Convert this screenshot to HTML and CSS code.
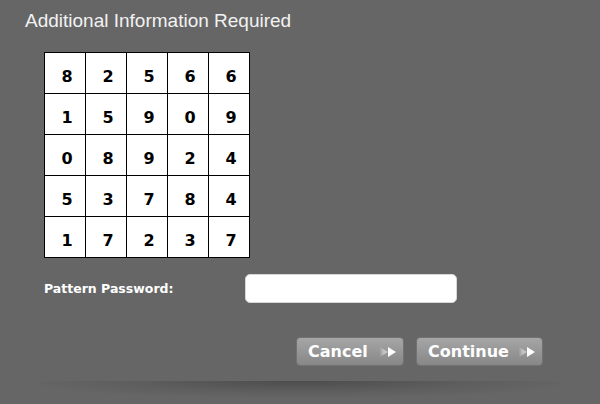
FILE: index.html
```html
<!DOCTYPE html>
<html>
<head>
<meta charset="utf-8">
<link rel="stylesheet" href="styles.css">
</head>
<body>
<div class="dialog">
  <h1 class="title">Additional Information Required</h1>
  <div class="grid">
    <div class="cell">8</div><div class="cell">2</div><div class="cell">5</div><div class="cell">6</div><div class="cell">6</div>
    <div class="cell">1</div><div class="cell">5</div><div class="cell">9</div><div class="cell">0</div><div class="cell">9</div>
    <div class="cell">0</div><div class="cell">8</div><div class="cell">9</div><div class="cell">2</div><div class="cell">4</div>
    <div class="cell">5</div><div class="cell">3</div><div class="cell">7</div><div class="cell">8</div><div class="cell">4</div>
    <div class="cell">1</div><div class="cell">7</div><div class="cell">2</div><div class="cell">3</div><div class="cell">7</div>
  </div>
  <div class="field">
    <label class="label" for="pw">Pattern Password:</label>
    <input class="input" id="pw" type="password">
  </div>
  <div class="actions">
    <button class="btn btn-cancel" type="button">Cancel<svg class="arrows" width="16" height="10" viewBox="0 0 16 10"><defs><linearGradient id="fa" x1="0" x2="1" y1="0" y2="0"><stop offset="0" stop-color="#fff" stop-opacity="0.05"/><stop offset="0.5" stop-color="#fff" stop-opacity="0.45"/></linearGradient></defs><polygon points="0,0 8,5 0,10" fill="url(#fa)"/><polygon points="8,0 16,5 8,10" fill="#fff"/></svg></button>
    <button class="btn btn-continue" type="button">Continue<svg class="arrows" width="16" height="10" viewBox="0 0 16 10"><defs><linearGradient id="fb" x1="0" x2="1" y1="0" y2="0"><stop offset="0" stop-color="#fff" stop-opacity="0.05"/><stop offset="0.5" stop-color="#fff" stop-opacity="0.45"/></linearGradient></defs><polygon points="0,0 8,5 0,10" fill="url(#fb)"/><polygon points="8,0 16,5 8,10" fill="#fff"/></svg></button>
  </div>
  <div class="shadow"></div>
</div>
</body>
</html>
```
FILE: styles.css
```css
html, body {
  margin: 0;
  padding: 0;
  background: #666666;
  height: 100%;
}
.dialog {
  width: 600px;
  padding-top: 10px;
}
.title {
  margin: 0 0 0 25px;
  font-family: "Liberation Sans", Arial, sans-serif;
  font-weight: normal;
  font-size: 19px;
  line-height: 22px;
  color: #f2f2f2;
}
.grid {
  display: grid;
  grid-template-columns: repeat(5, 40px);
  grid-auto-rows: 40px;
  gap: 1px;
  width: fit-content;
  margin: 20px 0 0 44px;
  background: #000;
  border: 1px solid #000;
}
.cell {
  box-sizing: border-box;
  background: #fff;
  display: flex;
  align-items: center;
  justify-content: center;
  padding: 6px 0 0 4px;
  font-family: "DejaVu Sans", Verdana, sans-serif;
  font-weight: bold;
  font-size: 16px;
  color: #000;
}
.field {
  display: flex;
  align-items: center;
  margin: 16px 0 0 44px;
}
.label {
  width: 201px;
  font-family: "DejaVu Sans", Verdana, sans-serif;
  font-weight: bold;
  font-size: 12.5px;
  color: #fff;
}
.input {
  box-sizing: border-box;
  width: 212px;
  height: 29px;
  margin: 0;
  border: 1px solid #d8d8d8;
  border-radius: 5px;
  background: #fff;
  outline: none;
}
.actions {
  display: flex;
  justify-content: flex-end;
  gap: 12px;
  margin: 34px 57px 0 0;
}
.btn {
  box-sizing: border-box;
  height: 29px;
  display: flex;
  align-items: center;
  padding: 0 7px 0 11px;
  border: 1px solid #727272;
  border-radius: 4px;
  background: linear-gradient(to bottom, #a6a6a6, #878787);
  font-family: "DejaVu Sans", Verdana, sans-serif;
  font-weight: bold;
  font-size: 16px;
  color: #fff;
  cursor: pointer;
}
.btn-cancel {
  width: 108px;
}
.btn-continue {
  width: 127px;
}
.arrows {
  margin-left: auto;
  margin-top: 1px;
}
.shadow {
  margin: 15px 40px 0 40px;
  height: 18px;
  background: radial-gradient(ellipse 55% 100% at 50% 0, rgba(0,0,0,0.25), rgba(0,0,0,0.08) 60%, rgba(0,0,0,0) 100%);
}
```
